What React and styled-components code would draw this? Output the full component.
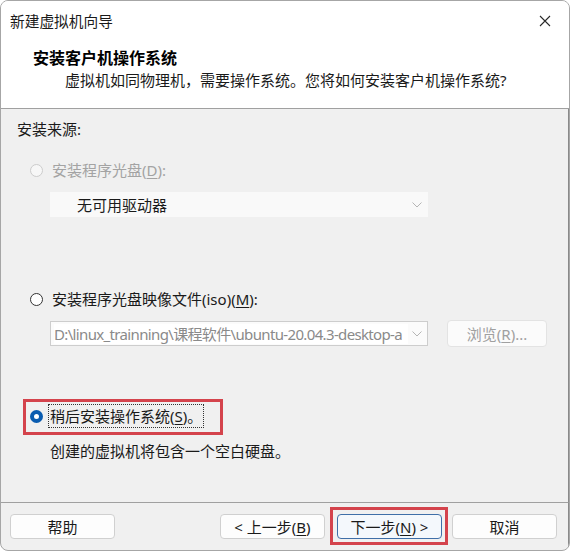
import React from 'react';
import styled, { createGlobalStyle } from 'styled-components';

const FONT = `"Noto Sans", "Noto Sans CJK SC", sans-serif`;

const GlobalStyle = createGlobalStyle`
  html, body { margin: 0; padding: 0; background: #ffffff; }
  body { font-family: ${FONT}; }
  * { box-sizing: border-box; }
`;

const Window = styled.div`
  width: 570px;
  height: 551px;
  border: 1px solid #a6a6a6;
  border-radius: 8px;
  overflow: hidden;
  display: flex;
  flex-direction: column;
  background: #f0f0f0;
  font-family: ${FONT};
  font-size: 15px;
  line-height: 20px;
  color: #1a1a1a;
`;

const TitleBar = styled.div`
  height: 39px;
  flex: none;
  background: #ffffff;
  display: flex;
  align-items: center;
  justify-content: space-between;
  padding: 0 14px 0 9px;
  font-size: 14.7px;
`;

const CloseButton = styled.div`
  width: 20px;
  height: 20px;
  display: flex;
  align-items: center;
  justify-content: center;
`;

const Header = styled.div`
  height: 69px;
  flex: none;
  background: #ffffff;
  border-bottom: 1px solid #a0a0a0;
  padding: 8px 0 0 32px;
`;

const HeaderTitle = styled.div`
  font-size: 16px;
  font-weight: 700;
  line-height: 20px;
  color: #000;
`;

const HeaderText = styled.div`
  margin-top: 2px;
  padding-left: 32px;
  font-size: 15px;
  line-height: 20px;
`;

const Body = styled.div`
  flex: 1;
  display: flex;
  flex-direction: column;
  align-items: flex-start;
  border-right: 1px solid #8a8a8a;
`;

const SourceLabel = styled.div`
  margin: 10px 0 0 16px;
`;

const OptionRow = styled.label`
  position: relative;
  display: flex;
  align-items: center;
  gap: 7px;
  margin: ${p => p.$top}px 0 0 29px;
  height: 20px;
  color: ${p => (p.$disabled ? '#a3a3a3' : '#1a1a1a')};
`;

const Radio = styled.span`
  width: 13px;
  height: 13px;
  flex: none;
  border-radius: 50%;
  border: ${p => (p.$checked ? '4px solid #0a5cb0' : p.$disabled ? '1px solid #cccccc' : '1px solid #333333')};
  background: ${p => (p.$disabled ? '#f7f7f7' : '#ffffff')};
`;

const OptionText = styled.span`
  padding: 1px 1px;
  border: 1px ${p => (p.$focused ? 'dotted #333' : 'solid transparent')};
  margin-left: ${p => (p.$focused ? '-2px' : '0')};
  line-height: 20px;
`;

const Hotkey = styled.span`
  text-decoration: underline;
  text-underline-offset: 2px;
`;

const RedMark = styled.span`
  position: absolute;
  left: -7px;
  top: -7px;
  width: 200px;
  height: 36px;
  border: 3px solid #d4434c;
  pointer-events: none;
`;

const DriveSelect = styled.div`
  margin: 12px 0 0 49px;
  width: 378px;
  height: 25px;
  background: #f9f9f9;
  display: flex;
  align-items: center;
  justify-content: space-between;
  padding: 0 6px 0 27px;
  color: #1a1a1a;
`;

const IsoRow = styled.div`
  margin: 11px 0 0 49px;
  display: flex;
  align-items: flex-start;
  gap: 19px;
`;

const PathBox = styled.div`
  margin-top: 1px;
  width: 378px;
  height: 25px;
  border: 1px solid #cdcdcd;
  background: #fbfbfb;
  display: flex;
  align-items: center;
  padding: 0 5px 0 3px;
  color: #8a8a8a;
`;

const PathText = styled.div`
  flex: 1;
  min-width: 0;
  white-space: nowrap;
  overflow: hidden;
  background: #ffffff;
  margin-right: 4px;
  letter-spacing: -0.65px;
`;

const BrowseButton = styled.div`
  width: 100px;
  height: 27px;
  border: 1px solid #e3e3e3;
  border-radius: 4px;
  background: #fbfbfb;
  color: #a0a0a0;
  display: flex;
  align-items: center;
  justify-content: center;
`;

const Description = styled.div`
  margin: 15px 0 0 49px;
`;

const Footer = styled.div`
  height: 48px;
  flex: none;
  border-top: 1px solid #a0a0a0;
  display: flex;
  align-items: flex-start;
  justify-content: space-between;
  padding: 11px 11px 0 9px;
  border-right: 1px solid #8a8a8a;
`;

const ButtonGroup = styled.div`
  display: flex;
  align-items: flex-start;
`;

const Button = styled.button`
  position: relative;
  width: 105px;
  height: 25px;
  margin-left: ${p => p.$gap || 0}px;
  padding: 0;
  border: 1px solid ${p => (p.$primary ? '#3f6fa8' : '#d0d0d0')};
  border-radius: 4px;
  background: ${p => (p.$primary ? '#f4f8fc' : '#fdfdfd')};
  font-family: ${FONT};
  font-size: 15px;
  line-height: 20px;
  color: #1a1a1a;
`;

const ButtonMark = styled.span`
  position: absolute;
  left: -8px;
  top: -8px;
  right: -7px;
  bottom: -7px;
  border: 3px solid #d4434c;
  pointer-events: none;
`;

const Chevron = ({ color }) => (
  <svg width="10" height="6" viewBox="0 0 10 6">
    <path d="M0.5 0.5 L5 5 L9.5 0.5" fill="none" stroke={color} strokeWidth="1" />
  </svg>
);

export default function App() {
  return (
    <>
      <GlobalStyle />
      <Window>
        <TitleBar>
          <span>新建虚拟机向导</span>
          <CloseButton>
            <svg width="12" height="12" viewBox="0 0 12 12">
              <path d="M1 1 L11 11 M11 1 L1 11" stroke="#2a2a2a" strokeWidth="1.1" fill="none" />
            </svg>
          </CloseButton>
        </TitleBar>
        <Header>
          <HeaderTitle>安装客户机操作系统</HeaderTitle>
          <HeaderText>虚拟机如同物理机，需要操作系统。您将如何安装客户机操作系统?</HeaderText>
        </Header>
        <Body>
          <SourceLabel>安装来源:</SourceLabel>
          <OptionRow $top={21} $disabled>
            <Radio $disabled />
            <OptionText>安装程序光盘(<Hotkey>D</Hotkey>):</OptionText>
          </OptionRow>
          <DriveSelect>
            <span>无可用驱动器</span>
            <Chevron color="#b5b5b5" />
          </DriveSelect>
          <OptionRow $top={72}>
            <Radio />
            <OptionText>安装程序光盘映像文件(iso)(<Hotkey>M</Hotkey>):</OptionText>
          </OptionRow>
          <IsoRow>
            <PathBox>
              <PathText>D:\linux_trainning\课程软件\ubuntu-20.04.3-desktop-a</PathText>
              <Chevron color="#b5b5b5" />
            </PathBox>
            <BrowseButton>浏览(<Hotkey>R</Hotkey>)...</BrowseButton>
          </IsoRow>
          <OptionRow $top={59}>
            <Radio $checked />
            <OptionText $focused>稍后安装操作系统(<Hotkey>S</Hotkey>)。</OptionText>
            <RedMark />
          </OptionRow>
          <Description>创建的虚拟机将包含一个空白硬盘。</Description>
        </Body>
        <Footer>
          <Button>帮助</Button>
          <ButtonGroup>
            <Button>&lt; 上一步(<Hotkey>B</Hotkey>)</Button>
            <Button $primary $gap={12}>
              下一步(<Hotkey>N</Hotkey>) &gt;
              <ButtonMark />
            </Button>
            <Button $gap={10}>取消</Button>
          </ButtonGroup>
        </Footer>
      </Window>
    </>
  );
}
